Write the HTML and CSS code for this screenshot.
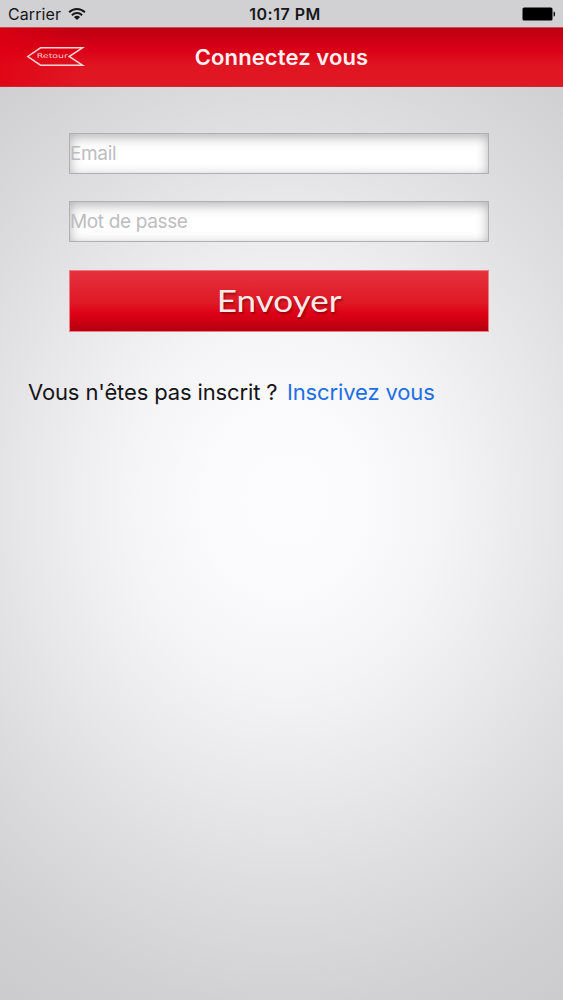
FILE: index.html
```html
<!DOCTYPE html>
<html lang="fr">
<head>
<meta charset="utf-8">
<title>Connectez vous</title>
<link rel="stylesheet" href="styles.css">
</head>
<body>
<div class="screen">
  <div class="status">
    <div class="carrier">
      <span class="carrier-name">Carrier</span>
      <svg class="wifi" width="18" height="14" viewBox="0 0 18 14" fill="none" stroke="#17171a" stroke-width="2">
        <path d="M1.1 5.3C5.6.9 12.4.9 16.9 5.3"/>
        <path d="M3.9 8.2C6.8 5.3 11.2 5.3 14.1 8.2"/>
        <path d="M9 13 5.9 9.9C7.6 8.2 10.4 8.2 12.1 9.9Z" fill="#17171a" stroke="none"/>
      </svg>
    </div>
    <span class="clock">10:17 PM</span>
    <svg class="battery" width="34" height="14" viewBox="0 0 34 14">
      <rect x=".5" y=".5" width="30" height="13" rx="1.6"/>
      <path d="M31.6 4.6h.5q1 .6 1 2.4t-1 2.4h-.5z"/>
    </svg>
  </div>
  <header class="navbar">
    <a class="back" href="#">
      <svg width="59" height="22" viewBox="0 0 59 22">
        <path d="M1.8 10.5 14.5 1.8H56.5L43.2 10.5 56.5 19.2H14.5Z" fill="none" stroke="#ffd6d6" stroke-width="1.5"/>
        <text class="back-label" x="10.8" y="12.1" textLength="31" lengthAdjust="spacingAndGlyphs">Retour</text>
      </svg>
    </a>
    <h1 class="title">Connectez vous</h1>
    <span></span>
  </header>
  <form class="form">
    <input class="field" type="email" placeholder="Email">
    <input class="field" type="password" placeholder="Mot de passe">
    <button class="submit" type="button"><span class="submit-label">Envoyer</span></button>
  </form>
  <p class="signup"><span class="question">Vous n'êtes pas inscrit ?</span><a class="link" href="#">Inscrivez vous</a></p>
</div>
</body>
</html>
```
FILE: styles.css
```css
* { box-sizing: border-box; }

body {
  margin: 0;
  font-family: Inter, "Liberation Sans", sans-serif;
}

.screen {
  display: flex;
  flex-direction: column;
  height: 1000px;
  overflow: hidden;
  background: radial-gradient(ellipse 580px 670px at 285px 500px, #fcfbfd 0%, #fbfafc 13%, #f4f3f5 28%, #e9e8ea 43%, #dfdee0 56%, #d1d0d3 76%, #c7c6c9 100%);
}

.status {
  display: grid;
  grid-template-columns: 1fr auto 1fr;
  align-items: center;
  height: 27px;
  padding: 1px 7px 0 8px;
  background: #d1d0d3;
  color: #17171a;
  font-size: 16px;
}

.carrier { display: flex; align-items: center; gap: 7px; }
.carrier-name { letter-spacing: 0.1px; }
.clock { padding-left: 6px; font-weight: 600; font-size: 16px; letter-spacing: 0.5px; }
.battery { justify-self: end; fill: #000; }
.wifi { display: block; margin-top: -1px; }

.navbar {
  display: grid;
  grid-template-columns: 1fr auto 1fr;
  align-items: center;
  height: 60px;
  padding: 0 26px;
  border-top: 1px solid #d24850;
  border-bottom: 1px solid #c92934;
  background:
    linear-gradient(90deg, rgba(224, 0, 18, 0.75), rgba(224, 0, 18, 0) 14%),
    linear-gradient(#bd0012, #da0017 38%, #e01522 65%, #df1823);
}

.back { display: block; height: 22px; }
.back-label {
  fill: #ffc9cb;
  font-family: "DejaVu Sans", sans-serif;
  font-size: 6.5px;
}

.title {
  margin: 0;
  color: #fff1f1;
  font-size: 22px;
  font-weight: 600;
  letter-spacing: 0.1px;
}

.form {
  display: flex;
  flex-direction: column;
  width: 420px;
  margin: 46px 0 0 69px;
}

.field {
  height: 41px;
  margin: 0 0 27px;
  padding: 0;
  border: 1px solid #b0afb2;
  border-radius: 0;
  outline: none;
  background: #fff;
  box-shadow: inset 0 3px 12px rgba(70, 70, 76, 0.42);
  font: 19px Inter, "Liberation Sans", sans-serif;
  letter-spacing: -0.35px;
}
.field::placeholder { color: #bdbcc0; opacity: 1; }

.submit {
  height: 62px;
  margin-top: 1px;
  padding: 0 0 2px;
  border: 1px solid #ed7b84;
  background: linear-gradient(#e5313d, #df1925 53%, #de0015 72%, #b4000f);
  color: #ffe9e9;
  font: 31px Lato, sans-serif;
  text-shadow: 1px 2px 2px rgba(90, 0, 0, 0.55);
}
.submit-label { display: inline-block; transform: scaleX(1.13); }

.signup {
  display: flex;
  gap: 9.5px;
  margin: 46px 0 0 28px;
  color: #151417;
  font-size: 22px;
  letter-spacing: -0.13px;
  line-height: 28px;
}
.link { color: #1c6fe4; text-decoration: none; }
```
